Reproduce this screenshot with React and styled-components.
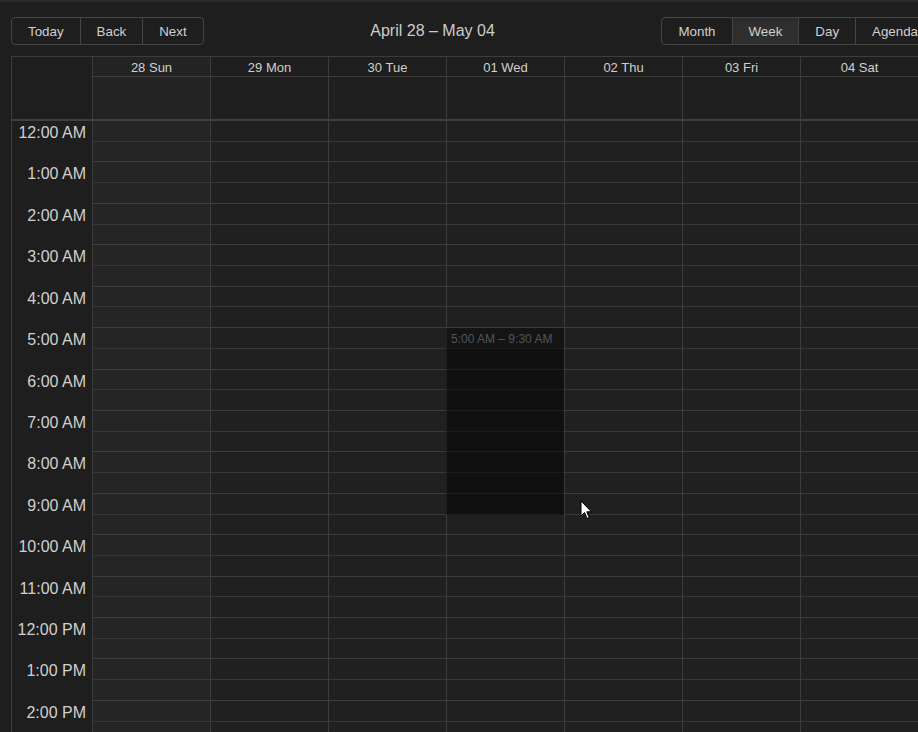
import React from 'react';
import styled, { createGlobalStyle } from 'styled-components';

const GlobalStyle = createGlobalStyle`
  html, body {
    margin: 0;
    padding: 0;
    background: #1e1e1e;
    overflow: hidden;
  }
  body {
    font-family: "Liberation Sans", Arial, sans-serif;
    color: #cccccc;
  }
`;

const Page = styled.div`
  position: relative;
  height: 732px;
  box-sizing: border-box;
  border-top: 2px solid #2a2a2a;
  padding: 15px 0 0 11px;
  overflow: hidden;
`;

const Toolbar = styled.div`
  display: flex;
  align-items: center;
  width: calc(100% + 17px);
  margin-bottom: 11px;
`;

const ButtonGroup = styled.div`
  display: flex;
  flex-shrink: 0;
`;

const ToolButton = styled.button`
  font-family: "Liberation Sans", Arial, sans-serif;
  font-size: 13.33px;
  color: #d0d0d0;
  background: ${p => (p.active ? '#2f2f2f' : 'transparent')};
  box-shadow: ${p => (p.active ? 'inset 0 3px 5px rgba(0,0,0,0.125)' : 'none')};
  border: 1px solid #454545;
  margin-left: -1px;
  height: 28px;
  padding: 0 16px;
  white-space: nowrap;
  cursor: pointer;
  &:first-child {
    margin-left: 0;
    border-radius: 4px 0 0 4px;
  }
  &:last-child {
    border-radius: 0 4px 4px 0;
  }
`;

const Label = styled.span`
  flex: 1;
  text-align: center;
  font-size: 16px;
  padding: 0 10px;
`;

const Calendar = styled.div`
  border: 1px solid #3c3c3c;
  border-right: none;
`;

const Header = styled.div`
  display: grid;
  grid-template-columns: 80px repeat(7, 1fr);
  grid-template-rows: 20px 42px;
  border-bottom: 2px solid #3d4141;
`;

const GutterHead = styled.div`
  grid-row: 1 / span 2;
`;

const DayName = styled.div`
  border-left: 1px solid #3c3c3c;
  border-bottom: 1px solid #3c3c3c;
  font-size: 13px;
  text-align: center;
  line-height: 21px;
  color: #d0d0d0;
  background: ${p => (p.today ? '#232323' : 'transparent')};
`;

const AllDay = styled.div`
  border-left: 1px solid #3c3c3c;
  background: ${p => (p.today ? '#232323' : '#1f1f1f')};
`;

const Body = styled.div`
  display: grid;
  grid-template-columns: 80px repeat(7, 1fr);
`;

const Gutter = styled.div`
  background: #1e1e1e;
`;

const TimeLabel = styled.div`
  height: 41.43px;
  box-sizing: border-box;
  text-align: right;
  padding: 3px 6px 0 0;
  font-size: 16px;
  line-height: 18px;
  color: #d0d0d0;
`;

const DayColumn = styled.div`
  position: relative;
  border-left: 1px solid #3c3c3c;
  background: ${p => (p.today ? '#252525' : '#202020')};
`;

const HourGroup = styled.div`
  height: 41.43px;
  box-sizing: border-box;
  border-bottom: 1px solid #3c3c3c;
  display: flex;
  flex-direction: column;
`;

const Slot = styled.div`
  flex: 1;
  & + & {
    border-top: 1px solid #383838;
  }
`;

const Event = styled.div`
  position: absolute;
  left: -1px;
  right: 0;
  background: rgba(0, 0, 0, 0.5);
`;

const EventLabel = styled.div`
  height: 20px;
  box-sizing: border-box;
  padding: 4px 0 0 5px;
  font-size: 12px;
  color: #4f565c;
  background: rgba(255, 255, 255, 0.02);
  white-space: nowrap;
`;

const Cursor = styled.svg`
  position: absolute;
  left: 580px;
  top: 498px;
`;

const days = [
  { label: '28 Sun', today: true },
  { label: '29 Mon' },
  { label: '30 Tue' },
  { label: '01 Wed', event: true },
  { label: '02 Thu' },
  { label: '03 Fri' },
  { label: '04 Sat' },
];

const hours = Array.from({ length: 24 }, (_, i) => {
  const h = i % 12 === 0 ? 12 : i % 12;
  return `${h}:00 ${i < 12 ? 'AM' : 'PM'}`;
});

const HOUR = 41.43;

export default function App() {
  return (
    <>
      <GlobalStyle />
      <Page>
        <Toolbar>
          <ButtonGroup>
            <ToolButton>Today</ToolButton>
            <ToolButton>Back</ToolButton>
            <ToolButton>Next</ToolButton>
          </ButtonGroup>
          <Label>April 28 – May 04</Label>
          <ButtonGroup>
            <ToolButton>Month</ToolButton>
            <ToolButton active>Week</ToolButton>
            <ToolButton>Day</ToolButton>
            <ToolButton>Agenda</ToolButton>
          </ButtonGroup>
        </Toolbar>

        <Calendar>
          <Header>
            <GutterHead />
            {days.map(d => (
              <DayName key={d.label} today={d.today}>{d.label}</DayName>
            ))}
            {days.map(d => (
              <AllDay key={d.label} today={d.today} />
            ))}
          </Header>

          <Body>
            <Gutter>
              {hours.map(h => (
                <TimeLabel key={h}>{h}</TimeLabel>
              ))}
            </Gutter>
            {days.map(d => (
              <DayColumn key={d.label} today={d.today}>
                {hours.map(h => (
                  <HourGroup key={h}>
                    <Slot />
                    <Slot />
                  </HourGroup>
                ))}
                {d.event && (
                  <Event style={{ top: 5 * HOUR, height: 4.5 * HOUR }}>
                    <EventLabel>5:00 AM – 9:30 AM</EventLabel>
                  </Event>
                )}
              </DayColumn>
            ))}
          </Body>
        </Calendar>

        <Cursor width="13" height="20" viewBox="0 0 13 20">
          <path d="M1 1 L1 16 L4.5 12.5 L7 18.5 L9.2 17.6 L6.8 11.8 L11.5 11.8 Z" fill="#fff" stroke="#000" strokeWidth="1" strokeLinejoin="round" />
        </Cursor>
      </Page>
    </>
  );
}
